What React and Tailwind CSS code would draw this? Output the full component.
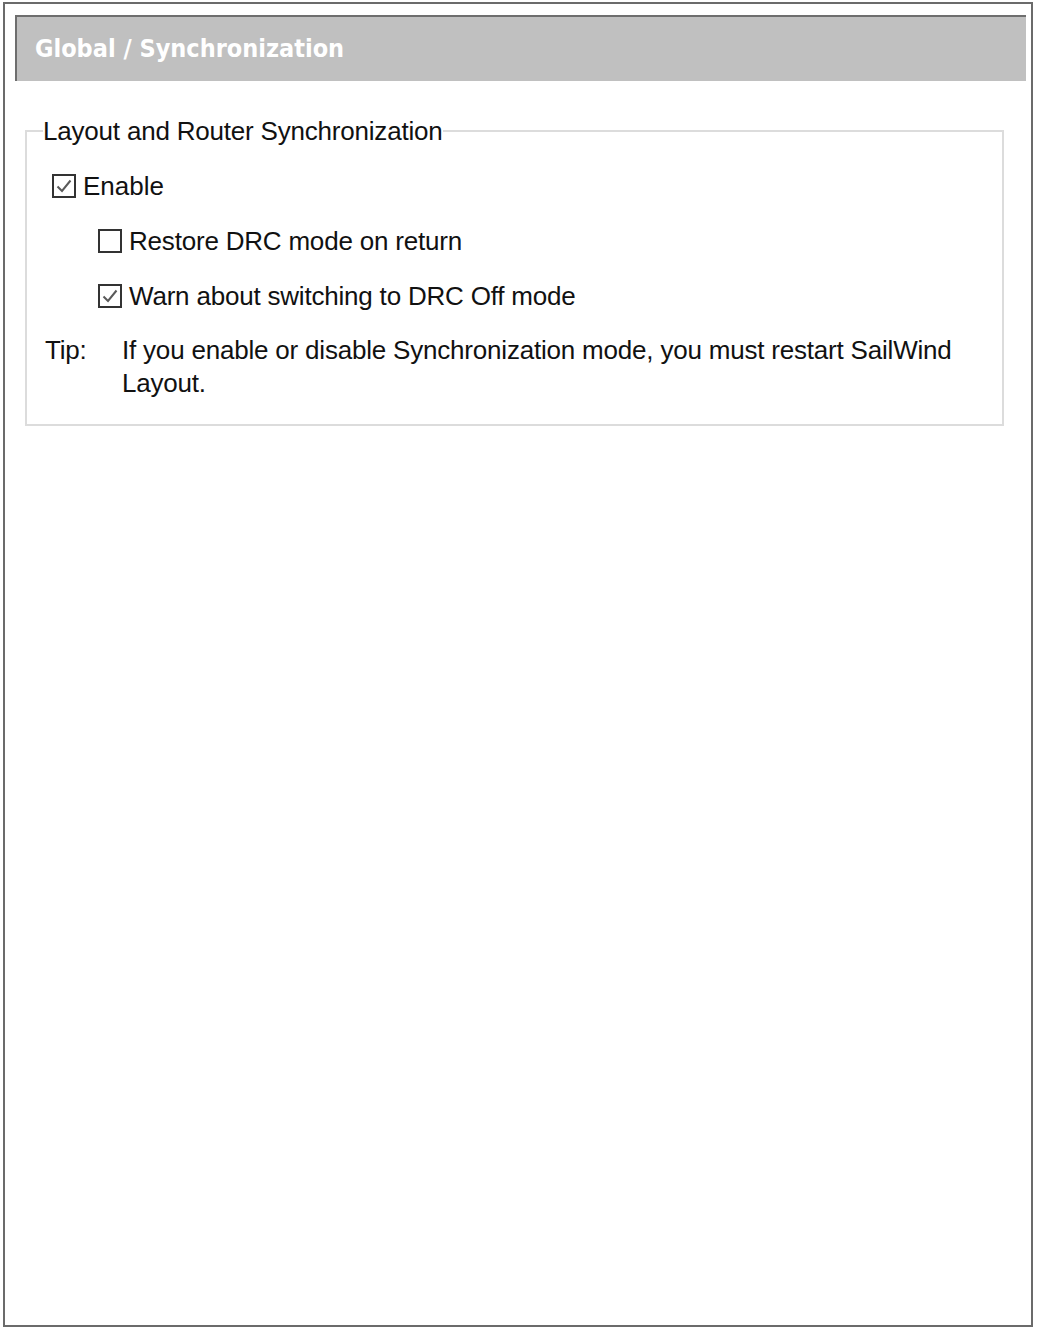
import React from 'react';

const Box = ({ checked }) => (
  <span className="flex h-[24px] w-[24px] shrink-0 items-center justify-center border-2 border-[#333333] bg-white">
    {checked && (
      <svg width="18" height="18" viewBox="0 0 18 18" fill="none">
        <path d="M2.5 9.5 L7 14 L15.5 3.5" stroke="#5a5a5a" strokeWidth="2" />
      </svg>
    )}
  </span>
);

const Option = ({ checked, label, className }) => (
  <label className={`flex h-[55px] items-center gap-[7px] ${className}`}>
    <Box checked={checked} />
    <span className="leading-[30px]">{label}</span>
  </label>
);

export default function App() {
  return (
    <div className="h-[1339px] w-[1041px] bg-white pl-[3px] pt-[2px] font-['Liberation_Sans',Arial,sans-serif] text-[26px] tracking-[-0.2px] text-[#111111]">
      <div className="flex h-[1325px] w-[1030px] flex-col border-2 border-[#6b6b6b] pl-[10px] pr-[5px] pt-[11px]">
        <div className="flex h-[66px] items-center border-l-2 border-t-2 border-[#6e6e6e] bg-[#c0c0c0] pl-[18px]">
          <span className="font-['DejaVu_Sans_Condensed',sans-serif] text-[25px] font-bold tracking-normal text-white">
            Global / Synchronization
          </span>
        </div>

        <fieldset className="ml-[10px] mr-[22px] mt-[35px] border-2 border-[#dcdcdc] px-[18px] pb-[24px] pt-0">
          <legend className="-ml-[2px] leading-[30px]">Layout and Router Synchronization</legend>
          <div className="flex flex-col pt-[12px]">
            <Option checked label="Enable" className="ml-[7px] tracking-normal" />
            <Option label="Restore DRC mode on return" className="ml-[53px]" />
            <Option checked label="Warn about switching to DRC Off mode" className="ml-[53px]" />
            <div className="mt-[11px] flex leading-[33px]">
              <span className="w-[77px] shrink-0">Tip:</span>
              <span>If you enable or disable Synchronization mode, you must restart SailWind Layout.</span>
            </div>
          </div>
        </fieldset>
      </div>
    </div>
  );
}
